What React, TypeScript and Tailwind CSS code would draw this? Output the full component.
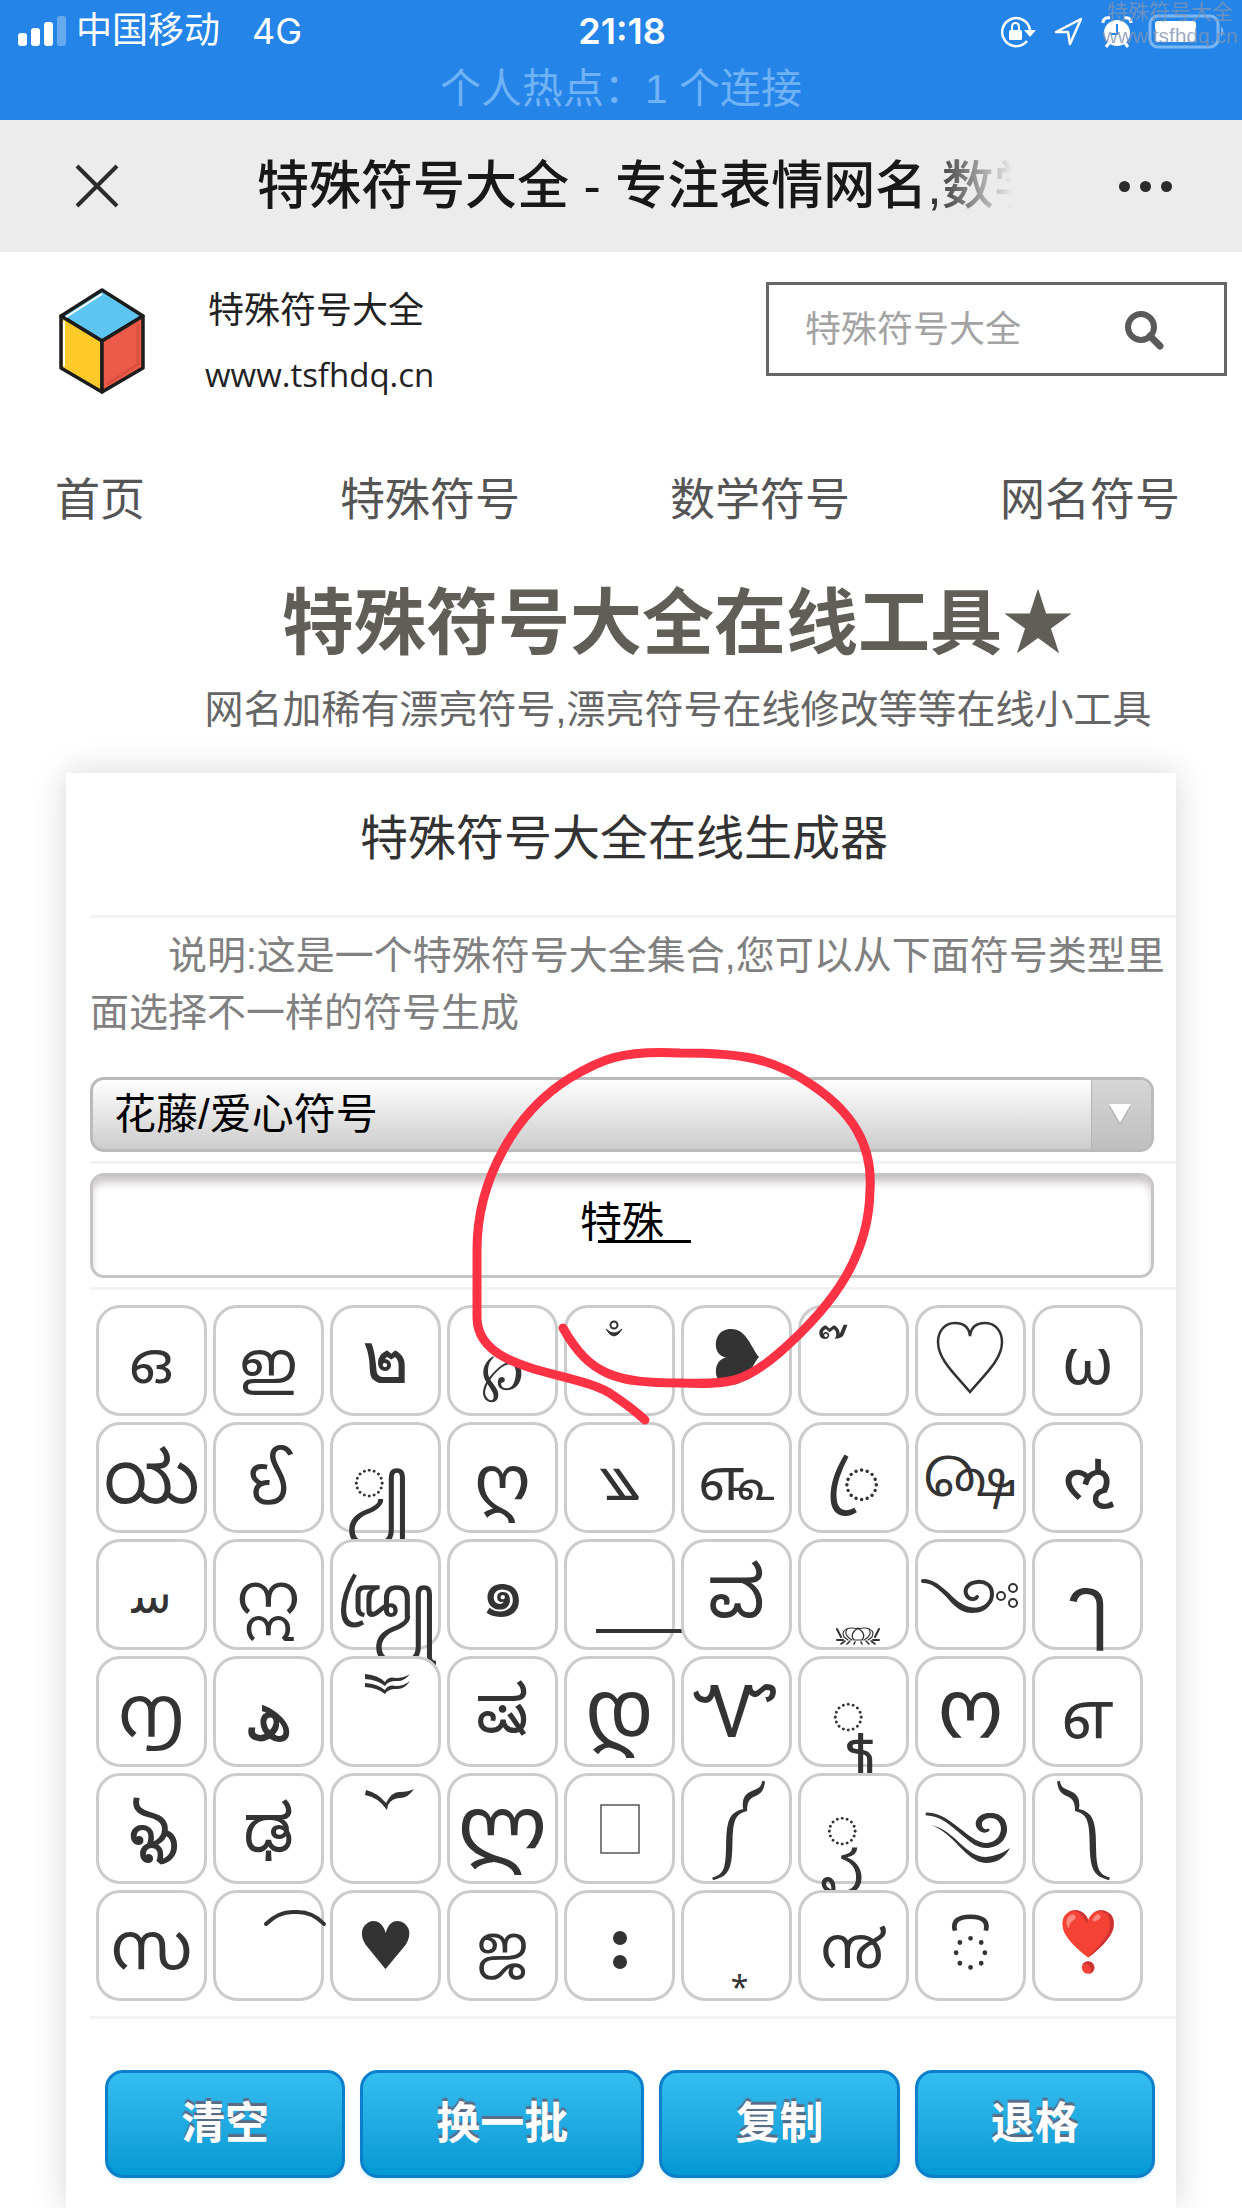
import type { ReactNode } from 'react'

const NAV_LINKS = ['特殊符号', '数学符号', '网名符号']

const ACTIONS = [
  { label: '清空', grow: 'flex-[240]' },
  { label: '换一批', grow: 'flex-[285]' },
  { label: '复制', grow: 'flex-[240]' },
  { label: '退格', grow: 'flex-[240]' },
]

type Key = { name: string; text?: string; art?: ReactNode; className?: string }

const line = { fill: 'none', stroke: '#333', strokeLinecap: 'round' as const }

// drawn ornaments share one 105 x 105 canvas, offset by the key's 3px border
const SMALL_MOON = (
  <g>
    <circle cx="50" cy="20" r="3.5" {...line} strokeWidth="2" />
    <path d="M42 24 Q50 38 58 24 Q50 32 42 24 Z" fill="#333" stroke="#333" />
  </g>
)
const SIDE_HEART = <path d="M78 52 C70 43 66 24 50 24 C38 24 34 34 35 42 C36 50 43 54 51 52 C43 51 36 56 35 64 C34 72 38 80 50 80 C66 80 70 61 78 52 Z" fill="#333" />
const OPEN_HEART = <path d="M55 31 C54 22 49 18 40 18 C29 18 23 27 23 37 C23 55 41 70 55 87 C69 70 87 55 87 37 C87 27 81 18 70 18 C61 18 56 22 55 31 Z" {...line} strokeWidth="2.5" />
const LONG_LINE = <path d="M32 92 H118" stroke="#333" strokeWidth="4" />
const LOTUS = (
  <g {...line} strokeWidth="1.2">
    <path d="M60 89 Q51 95 56 101 H64 Q69 95 60 89 Z" />
    <path d="M60 90 Q52 88 49 90 Q45 96 54 101 M60 90 Q68 88 71 90 Q75 96 66 101" />
    <path d="M49 90 Q43 92 46 98 L50 101 M71 90 Q77 92 74 98 L70 101" />
    <path d="M39 90 L43 98 M81 90 L77 98 M39 101 H45 M75 101 H81" strokeWidth="2" />
    <path d="M47 102 L43 105 M52 102 L49 105 M57 103 L56 105 M63 103 L64 105 M68 102 L71 105 M73 102 L77 105" strokeWidth="1.6" />
  </g>
)
const SWIRL_DOTS = (
  <g>
    <path d="M8 42 C28 42 37 70 57 71 C72 71 77 62 77 55 C77 46 70 42 62 43 C53 44 48 50 52 57 C55 61 60 61 62 58" {...line} strokeWidth="4" />
    <path d="M20 46 C33 57 40 74 57 74 C66 74 72 71 75 65 C60 74 44 66 34 54 C28 49 24 47 20 46 Z" fill="#333" />
    <circle cx="86" cy="57" r="4" {...line} strokeWidth="2" />
    <circle cx="98" cy="49" r="4" {...line} strokeWidth="2" />
    <circle cx="98" cy="64" r="4" {...line} strokeWidth="2" />
  </g>
)
const DOUBLE_BIRD = (
  <g fill="#333">
    <path d="M35 18 Q48 19 55 26 Q58 20 66 22 Q74 22 80 18 Q74 26 66 25 Q58 25 55 30 Q48 24 35 23 Z" />
    <path d="M35 27 Q48 28 55 34 Q58 28 66 30 Q74 30 80 25 Q74 34 66 33 Q58 33 55 38 Q48 32 35 31 Z" />
  </g>
)
const BIRD = <path d="M36 17 Q48 20 56 30 Q62 18 70 19 Q78 19 84 16 Q78 25 70 25 Q62 25 58 32 L57 37 Q48 24 35 22 Z" fill="#333" />
const BLANK_BOX = <rect x="37" y="32" width="38" height="48" fill="none" stroke="#555" strokeWidth="1.5" />
const DOUBLE_SWIRL = (
  <g>
    <path d="M12 41 C38 42 48 71 71 72 C85 72 90 63 90 55 C90 46 83 41 75 42 C66 42 61 48 64 54 C66 58 71 59 73 57" {...line} strokeWidth="3" />
    <path d="M30 46 C45 55 54 75 71 75 C84 75 92 66 92 56 C92 46 84 40 75 40 C64 40 58 48 62 55 C65 60 71 61 74 57 C68 57 65 52 68 48 C73 43 85 44 86 55 C86 65 78 70 71 70 C57 69 47 54 30 46 Z" fill="#333" />
    <path d="M16 52 C40 57 50 84 71 84 Q84 83 95 75 Q87 90 71 90 C50 89 40 60 16 52 Z" fill="#333" />
  </g>
)
const WIDE_ARC = <path d="M53 34 Q66 21 82 22 Q99 21 111 34" {...line} strokeWidth="4" />
const TWO_DOTS = (
  <g fill="#333">
    <circle cx="56" cy="48" r="7" />
    <circle cx="56" cy="72" r="7" />
  </g>
)

const KEYS: Key[] = [
  { name: 'o', text: 'ഒ' },
  { name: 'i', text: 'ഇ' },
  { name: 'thai two', text: '๒', className: 'text-[72px] pb-[12px]' },
  { name: 'script p', text: '℘', className: 'text-[52px] pt-[18px]' },
  { name: 'small moon', art: SMALL_MOON },
  { name: 'side heart', art: SIDE_HEART },
  { name: 'mai tri', text: '\u00a0๊', className: 'text-[58px] pt-[6px] pr-[36px]' },
  { name: 'open heart', art: OPEN_HEART },
  { name: 'omega', text: 'ω', className: 'text-[66px] pb-[6px]' },

  { name: 'ya', text: 'ಯ', className: 'text-[72px] pb-[6px]' },
  { name: 'ii', text: 'ઈ', className: 'text-[66px]' },
  { name: 'pengkal', text: '◌ꦾ', className: 'text-[58px] pr-[12px]' },
  { name: 'ghan', text: 'ღ', className: 'text-[72px]' },
  { name: 'lungsi', text: '꧉' },
  { name: 'credit', text: '௷' },
  { name: 'cakra', text: '◌ꦿ', className: 'text-[66px]' },
  { name: 'as above', text: '௸', className: 'text-[48px]' },
  { name: 'vocalic l', text: 'ઌ', className: 'text-[72px] pb-[6px]' },

  { name: 'seen', text: 'ﺳ', className: 'text-[48px]' },
  { name: 'burmese i', text: 'ဣ', className: 'text-[58px] pb-[6px]' },
  { name: 'dra', text: 'ꦢꦿꦾ' },
  { name: 'thai one', text: '๑', className: 'text-[72px] pb-[12px]' },
  { name: 'long line', art: LONG_LINE },
  { name: 'va', text: 'ವ', className: 'text-[72px] pb-[12px]' },
  { name: 'lotus', art: LOTUS },
  { name: 'swirl and dots', art: SWIRL_DOTS },
  { name: 'lakkhangyao', text: 'ๅ', className: 'text-[84px] pt-[18px]' },

  { name: 'hundred', text: '൱', className: 'text-[72px] pb-[6px]' },
  { name: 'heh', text: 'ھ', className: 'text-[72px]' },
  { name: 'double bird', art: DOUBLE_BIRD },
  { name: 'ssa', text: 'ಷ', className: 'text-[66px] pb-[12px]' },
  { name: 'don', text: 'დ', className: 'text-[84px] pb-[12px]' },
  { name: 'qui', text: 'Ꮙ', className: 'text-[72px] pb-[6px]' },
  { name: 'suku mendut', text: '◌ꦹ', className: 'text-[58px] pr-[12px]' },
  { name: 'on', text: 'ო', className: 'text-[84px] pb-[12px]' },
  { name: 'tamil e', text: 'எ', className: 'text-[66px]' },

  { name: 'vocalic ll', text: 'ৡ', className: 'text-[72px] pb-[18px]' },
  { name: 'ddha', text: 'ಢ', className: 'text-[66px] pb-[6px]' },
  { name: 'bird', art: BIRD },
  { name: 'las', text: 'ლ', className: 'text-[84px] pb-[12px]' },
  { name: 'blank box', art: BLANK_BOX },
  { name: 'left roof', text: '༼', className: 'text-[66px] pb-[12px]' },
  { name: 'keret', text: '◌ꦽ', className: 'text-[58px] pb-[6px] pr-[24px]' },
  { name: 'double swirl', art: DOUBLE_SWIRL },
  { name: 'right roof', text: '༽', className: 'text-[66px] pb-[12px] pr-[12px]' },

  { name: 'sa', text: 'സ', className: 'text-[66px] pb-[6px]' },
  { name: 'wide arc', art: WIDE_ARC },
  { name: 'heart', text: '♥', className: 'text-[66px] pb-[6px]' },
  { name: 'ja', text: 'ஜ', className: 'text-[52px] pb-[6px]' },
  { name: 'two dots', art: TWO_DOTS },
  { name: 'low asterisk', text: '⁎', className: 'text-[32px] pt-[48px] pl-[6px]' },
  { name: 'nine', text: '൯' },
  { name: 'vowel sign i', text: '◌ි', className: 'text-[66px]' },
  { name: 'heart exclamation', text: '❣️', className: 'text-[58px] pb-[12px]' },
]

function SignalBars() {
  return (
    <svg viewBox="0 0 49 30" className="h-[30px] w-[49px]" fill="#fff">
      <rect x="0" y="17" width="9" height="13" rx="3" />
      <rect x="13" y="12" width="9" height="18" rx="3" />
      <rect x="26" y="6" width="9" height="24" rx="3" />
      <rect x="39" y="0" width="9" height="30" rx="3" opacity="0.3" />
    </svg>
  )
}

function StatusIcons() {
  return (
    <svg viewBox="0 0 226 36" className="h-9 w-[226px]">
      {/* rotation lock */}
      <path d="M27 28 A14 14 0 1 1 30 17" fill="none" stroke="#fff" strokeWidth="2.5" />
      <path d="M24 17 H36 L30 24 Z" fill="#fff" />
      <rect x="9" y="17" width="13" height="10" rx="1.5" fill="#fff" />
      <path d="M12 18 V14 Q12 10 15.5 10 Q19 10 19 14 V18" fill="none" stroke="#fff" strokeWidth="2" />
      {/* location */}
      <path d="M56 19 L81 6 L70 31 L68 19 Z" fill="none" stroke="#fff" strokeWidth="2.5" strokeLinejoin="round" />
      {/* alarm */}
      <circle cx="117" cy="20" r="13" fill="#fff" />
      <path d="M103 10 Q103 4 110 5 M131 10 Q131 4 124 5 M109 30 L106 34 M125 30 L128 34" stroke="#fff" strokeWidth="3" fill="none" />
      <path d="M117 11 V21 H111" stroke="#2484e8" strokeWidth="2" fill="none" />
      {/* battery */}
      <rect x="150" y="3" width="68" height="31" rx="8" fill="none" stroke="#7db7f3" strokeWidth="3" />
      <rect x="155" y="8" width="41" height="21" rx="3" fill="#fff" />
      <path d="M221 13 Q226 18 221 24 Z" fill="#7db7f3" />
    </svg>
  )
}

function StatusBar() {
  return (
    <header className="relative h-[120px] bg-[#2484e8] text-white">
      <div className="grid h-[62px] grid-cols-3 items-center pl-[18px] pr-[16px] text-[36px] leading-[48px]">
        <div className="flex items-center">
          <SignalBars />
          <span className="ml-[9px]">中国移动</span>
          <span className="ml-[32px] font-['Inter','Noto_Sans_CJK_SC',sans-serif]">4G</span>
        </div>
        <time className="text-center font-['Inter',sans-serif] text-[36px] font-semibold">21:18</time>
        <div className="flex justify-end">
          <StatusIcons />
        </div>
      </div>
      <p className="pt-[2px] text-center text-[41px] leading-[50px] text-[#6fb2f5]">个人热点：1 个连接</p>
      <div className="absolute right-[4px] top-0 text-center text-[21px] leading-6 text-[#7f95b5] opacity-80">
        <p>特殊符号大全</p>
        <p className="font-['Liberation_Sans',sans-serif]">www.tsfhdq.cn</p>
      </div>
    </header>
  )
}

function TitleBar() {
  return (
    <div className="flex h-[132px] items-center bg-[#ececec] pl-[75px] pr-[70px]">
      <button type="button" aria-label="关闭" className="shrink-0">
        <svg viewBox="0 0 44 44" className="size-11" stroke="#2b2b2b" strokeWidth="4">
          <path d="M2 2 L42 42 M42 2 L2 42" />
        </svg>
      </button>
      <p className="ml-[138px] mr-[106px] flex-1 overflow-hidden whitespace-nowrap text-[52px] font-medium leading-[72px] text-[#181818] [mask-image:linear-gradient(to_right,#000_88%,transparent_100%)]">
        特殊符号大全 - 专注表情网名,数学
      </p>
      <button type="button" aria-label="更多" className="flex shrink-0 gap-[10px]">
        <span className="size-[11px] rounded-full bg-[#2b2b2b]" />
        <span className="size-[11px] rounded-full bg-[#2b2b2b]" />
        <span className="size-[11px] rounded-full bg-[#2b2b2b]" />
      </button>
    </div>
  )
}

function CubeLogo() {
  return (
    <svg viewBox="0 0 86 106" className="h-[106px] w-[86px]" stroke="#1c1c1c" strokeWidth="3.5" strokeLinejoin="round">
      <path d="M43 2 L84 28 L43 53 L2 28 Z" fill="#5ec5f2" />
      <path d="M2 28 L43 53 V104 L2 80 Z" fill="#ffcb2b" />
      <path d="M84 28 L43 53 V104 L84 80 Z" fill="#ec5b4a" />
      <path d="M7 29 L43 6" stroke="#fff" strokeWidth="2" />
      <path d="M5 33 V78" stroke="#fff" strokeWidth="2" />
      <path d="M79 36 V76 L48 96" stroke="#d9503f" strokeWidth="3" fill="none" />
    </svg>
  )
}

function SiteHeader() {
  return (
    <div className="flex items-start justify-between pl-[59px] pr-[15px] pt-[30px]">
      <a href="/" className="flex gap-[60px] pt-[6px]">
        <CubeLogo />
        <div className="pt-[2px] text-[#222]">
          <p className="pl-[3px] text-[36px] leading-[42px]">特殊符号大全</p>
          <p className="pt-[22px] font-['Open_Sans','Noto_Sans',sans-serif] text-[33px] leading-[42px]">www.tsfhdq.cn</p>
        </div>
      </a>
      <form className="flex h-[94px] w-[461px] min-w-0 items-center border-[3px] border-[#666] pl-[36px] pr-[60px] pt-[2px]">
        <input
          type="search"
          aria-label="搜索"
          placeholder="特殊符号大全"
          className="min-w-0 flex-1 text-[36px] leading-[48px] outline-none placeholder:text-[#a3a3a3]"
        />
        <button type="submit" aria-label="提交搜索">
          <svg viewBox="0 0 40 40" className="size-10" fill="none" stroke="#5a5a5a">
            <circle cx="17" cy="17" r="13" strokeWidth="6" />
            <path d="M26 26 L36 36" strokeWidth="7" strokeLinecap="round" />
          </svg>
        </button>
      </form>
    </div>
  )
}

function SymbolKey({ item }: { item: Key }) {
  return (
    <button
      type="button"
      aria-label={item.name}
      className="flex h-[111px] min-w-0 items-center justify-center rounded-[24px] border-[3px] border-[#ccc] bg-white"
    >
      {item.art ? (
        <svg viewBox="3 3 105 105" className="size-full overflow-visible">{item.art}</svg>
      ) : (
        <span className={`whitespace-nowrap leading-[96px] ${item.className ?? 'text-[58px]'}`}>{item.text}</span>
      )}
    </button>
  )
}

function Generator() {
  return (
    <section className="mx-[66px] mt-[36px] bg-white pb-[30px] pl-[24px] shadow-[0_0_32px_rgba(0,0,0,0.16)]">
      <h2 className="border-b-[3px] border-[#f2f2f2] pb-[44px] pr-[18px] pt-[34px] text-center text-[48px] leading-[64px] text-[#333]">特殊符号大全在线生成器</h2>
      <p className="indent-[78px] pt-[9px] text-[39px] leading-[57px] text-[#808080]">
        说明:这是一个特殊符号大全集合,您可以从下面符号类型里面选择不一样的符号生成
      </p>

      <div className="border-b-[3px] border-[#f3f3f3] pb-[9px] pr-[22px] pt-[36px]">
        <div className="relative">
          <select
            aria-label="符号类型"
            className="block h-[75px] w-full appearance-none rounded-[14px] border-[3px] border-[#bbb] bg-linear-to-b from-white to-[#cdcdcd] pl-[21px] text-[42px] text-black"
          >
            <option>花藤/爱心符号</option>
          </select>
          <span className="pointer-events-none absolute inset-y-[3px] right-[3px] flex w-[60px] items-center justify-center rounded-r-[11px] border-l border-[#b5b5b5] bg-linear-to-b from-[#d6d6d6] to-[#bfbfbf] pr-[3px]">
            <svg viewBox="0 0 22 21" className="h-[21px] w-[22px]">
              <path d="M0 2 H22 L11 21 Z" fill="#aaa" />
              <path d="M0 0 H22 L11 19 Z" fill="#fff" />
            </svg>
          </span>
        </div>
      </div>

      <div className="border-b-[3px] border-[#f3f3f3] py-[9px] pr-[22px]">
        <div className="relative">
          <input
            aria-label="生成结果"
            defaultValue="特殊"
            className="block h-[105px] w-full rounded-[14px] border-[3px] border-[#c6c4c4] pb-[14px] text-center text-[42px] text-black shadow-[inset_0_8px_8px_-2px_#c9c3c4] outline-none"
          />
          <span className="absolute left-[508px] top-[67px] h-[3px] w-[93px] bg-black" />
        </div>
      </div>

      <div className="grid grid-cols-9 gap-[6px] border-b-[3px] border-[#f3f3f3] pb-[15px] pl-[6px] pr-[33px] pt-[15px] font-['Noto_Sans','Noto_Sans_Kannada','Noto_Sans_Tamil','Noto_Sans_Malayalam','Noto_Sans_Myanmar','Noto_Sans_Bengali','Noto_Sans_Gujarati','Noto_Sans_Sinhala','DejaVu_Sans',sans-serif] text-[#333]">
        {KEYS.map((item) => (
          <SymbolKey key={item.name} item={item} />
        ))}
      </div>

      <div className="flex gap-[15px] pl-[15px] pr-[21px] pt-[51px]">
        {ACTIONS.map((action) => (
          <button
            key={action.label}
            type="button"
            className={`h-[108px] rounded-[18px] border-[3px] border-[#0b7fcb] bg-linear-to-b from-[#34bdf0] to-[#0299d3] text-[44px] font-bold text-white shadow-[0_3px_3px_#e3f4fb] [text-shadow:0_-3px_1px_#5a6b85] ${action.grow}`}
          >
            {action.label}
          </button>
        ))}
      </div>
    </section>
  )
}

export default function App() {
  return (
    <div className="relative overflow-hidden bg-white font-['Liberation_Sans','Noto_Sans_CJK_SC',sans-serif]">
      <StatusBar />
      <TitleBar />
      <main>
        <SiteHeader />
        <nav className="flex justify-between pl-[55px] pr-[62px] pt-[72px] text-[45px] leading-[66px] text-[#555]">
          <a href="/" className="pr-[45px]">首页</a>
          {NAV_LINKS.map((label) => (
            <a key={label} href={`/${label}`}>{label}</a>
          ))}
        </nav>
        <div className="pl-[114px] pt-[44px] text-center text-[#615e57]">
          <h1 className="text-[72px] font-bold leading-[90px]">特殊符号大全在线工具★</h1>
          <p className="pt-[15px] text-[39px] leading-[54px] text-[#666]">网名加稀有漂亮符号,漂亮符号在线修改等等在线小工具</p>
        </div>
        <Generator />
      </main>

      {/* freehand ring round the result box */}
      <svg viewBox="470 1045 410 385" className="pointer-events-none absolute left-[470px] top-[1045px] h-[385px] w-[410px]">
        <path
          d="M563 1328 C590 1376 617 1383 680 1383 C730 1385 745 1382 779 1353 C835 1304 869 1255 870 1190 C873 1145 852 1112 812 1085 C772 1057 740 1053 680 1053 C620 1050 600 1060 570 1078 C515 1112 477 1180 477 1250 V1318 C478 1375 580 1370 614 1396 Q632 1408 645 1420"
          fill="none"
          stroke="#fd3244"
          strokeWidth="9"
          strokeLinecap="round"
          strokeLinejoin="round"
        />
      </svg>
    </div>
  )
}
